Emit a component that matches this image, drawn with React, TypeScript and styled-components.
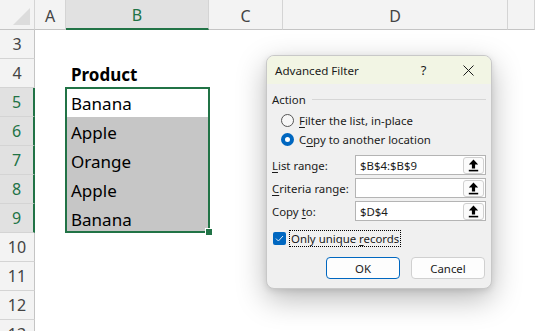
import React from 'react'
import styled, { createGlobalStyle } from 'styled-components'

const GREEN = '#217346'
const UI_FONT = '"Noto Sans", "Open Sans", Arial, sans-serif'

const GlobalStyle = createGlobalStyle`
  html, body {
    margin: 0;
    padding: 0;
    background: #ffffff;
    overflow: hidden;
  }
  #root {
    position: relative;
    width: 535px;
    height: 331px;
    overflow: hidden;
  }
`

const Sheet = styled.div`
  display: grid;
  grid-template-columns: 35px 31px 143px 74px 225px 1fr;
  grid-template-rows: 30px repeat(11, 29px);
  font-family: ${UI_FONT};
  background: #ffffff;
`

const Placed = styled.div<{ $col: number; $row: number | string }>`
  grid-column: ${({ $col }) => $col};
  grid-row: ${({ $row }) => $row};
  box-sizing: border-box;
  min-width: 0;
`

const Corner = styled(Placed)`
  position: relative;
  background: #f3f3f3;
  border-right: 1px solid #d4d4d4;
  border-bottom: 1px solid #c4c4c4;

  &::after {
    content: '';
    position: absolute;
    right: 4px;
    bottom: 4px;
    width: 0;
    height: 0;
    border-left: 17px solid transparent;
    border-bottom: 17px solid #dcdcdc;
  }
`

const ColHeader = styled(Placed)<{ $selected?: boolean }>`
  display: flex;
  align-items: center;
  justify-content: center;
  padding-top: 2px;
  font-size: 16px;
  color: ${({ $selected }) => ($selected ? GREEN : '#444444')};
  background: ${({ $selected }) => ($selected ? '#e1e1e1' : '#f3f3f3')};
  border-right: 1px solid #d4d4d4;
  border-bottom: ${({ $selected }) => ($selected ? `2px solid ${GREEN}` : '1px solid #c4c4c4')};
`

const RowHeader = styled(Placed)<{ $selected?: boolean }>`
  display: flex;
  align-items: center;
  justify-content: center;
  font-size: 16px;
  color: ${({ $selected }) => ($selected ? GREEN : '#444444')};
  background: ${({ $selected }) => ($selected ? '#e1e1e1' : '#f3f3f3')};
  border-bottom: 1px solid #d4d4d4;
  border-right: ${({ $selected }) => ($selected ? `2px solid ${GREEN}` : '1px solid #c4c4c4')};
`

const Cell = styled(Placed)<{ $bold?: boolean; $shaded?: boolean }>`
  display: flex;
  align-items: flex-end;
  padding: 0 0 2px 5px;
  font-size: 17px;
  font-weight: ${({ $bold }) => ($bold ? 700 : 400)};
  color: #000000;
  background: ${({ $shaded }) => ($shaded ? '#c6c6c6' : 'transparent')};
`

const Selection = styled(Placed)`
  position: relative;
  margin: -1px -1px 0 -1px;
  border: 2px solid ${GREEN};
  pointer-events: none;
`

const FillHandle = styled.div`
  position: absolute;
  right: -5px;
  bottom: -5px;
  width: 6px;
  height: 6px;
  background: ${GREEN};
  border: 1px solid #ffffff;
`

/* dialog */

const Dialog = styled.div`
  position: absolute;
  left: 266px;
  top: 55px;
  width: 226px;
  height: 234px;
  box-sizing: border-box;
  display: flex;
  flex-direction: column;
  border: 1px solid #c8c8c8;
  border-radius: 8px;
  background: #f0f0f0;
  box-shadow: 0 10px 30px rgba(0, 0, 0, 0.28), 0 2px 6px rgba(0, 0, 0, 0.1);
  overflow: hidden;
  font-family: ${UI_FONT};
  font-size: 11.4px;
  color: #1b1b1b;
`

const TitleBar = styled.div`
  display: flex;
  align-items: center;
  height: 28px;
  background: #f2f5e4;
`

const Title = styled.div`
  flex: 1;
  padding-left: 8px;
  font-size: 11.6px;
`

const TitleButton = styled.div`
  width: 45px;
  height: 100%;
  display: flex;
  align-items: center;
  justify-content: center;
  font-size: 13px;
`

const Body = styled.div`
  display: flex;
  flex-direction: column;
  padding: 7px 5px 0 5px;
`

const GroupTitle = styled.div`
  display: flex;
  align-items: center;
  gap: 6px;
  height: 16px;

  &::after {
    content: '';
    flex: 1;
    height: 1px;
    background: #d6d6d6;
  }
`

const RadioRow = styled.label<{ $first?: boolean }>`
  display: flex;
  align-items: center;
  gap: 5px;
  height: 19px;
  margin-top: ${({ $first }) => ($first ? '4px' : '0')};
  padding-left: 9px;
`

const Radio = styled.span<{ $checked?: boolean }>`
  box-sizing: border-box;
  width: 13px;
  height: 13px;
  border-radius: 50%;
  background: ${({ $checked }) => ($checked ? '#ffffff' : '#f7f7f7')};
  border: ${({ $checked }) => ($checked ? '4px solid #0067c0' : '1px solid #555555')};
`

const Fields = styled.div`
  display: flex;
  flex-direction: column;
  gap: 3px;
  margin-top: 6px;
`

const FieldRow = styled.div`
  display: flex;
  align-items: center;
  height: 20px;
`

const FieldLabel = styled.div`
  width: 83px;
`

const RefBox = styled.div`
  flex: 1;
  height: 20px;
  box-sizing: border-box;
  display: flex;
  align-items: center;
  padding: 0 1px 0 4px;
  background: #ffffff;
  border: 1px solid #b4b4b4;
`

const RefValue = styled.div`
  flex: 1;
`

const RefButton = styled.div`
  width: 21px;
  height: 17px;
  box-sizing: border-box;
  display: flex;
  align-items: center;
  justify-content: center;
  background: #fbfbfb;
  border: 1px solid #d0d0d0;
  border-radius: 3px;
`

const CheckRow = styled.div`
  display: flex;
  align-items: center;
  gap: 3px;
  margin-top: 9px;
  padding-left: 1px;
`

const CheckBox = styled.span`
  width: 13px;
  height: 13px;
  display: flex;
  align-items: center;
  justify-content: center;
  border-radius: 2px;
  background: #0067c0;
`

const FocusLabel = styled.span`
  padding: 0 1px;
  border: 1px dotted #000000;
  line-height: 15px;
`

const Buttons = styled.div`
  display: flex;
  justify-content: flex-end;
  gap: 11px;
  margin-top: 10px;
  padding-right: 1px;
`

const Button = styled.div<{ $primary?: boolean }>`
  width: 74px;
  height: 22px;
  box-sizing: border-box;
  display: flex;
  align-items: center;
  justify-content: center;
  background: #fdfdfd;
  border: 1px solid ${({ $primary }) => ($primary ? '#0067c0' : '#d0d0d0')};
  border-radius: 4px;
`

const U = styled.span`
  text-decoration: underline;
  text-underline-offset: 2px;
`

const UploadIcon = () => (
  <svg width="11" height="13" viewBox="0 0 11 13">
    <path d="M5.5 0.5 L0.8 5.6 H3.9 V9.4 H7.1 V5.6 H10.2 Z" fill="#000" />
    <rect x="0.8" y="10.8" width="9.4" height="1.6" fill="#000" />
  </svg>
)

const CloseIcon = () => (
  <svg width="11" height="11" viewBox="0 0 11 11">
    <path d="M0.5 0.5 L10.5 10.5 M10.5 0.5 L0.5 10.5" stroke="#1b1b1b" strokeWidth="1" />
  </svg>
)

const CheckIcon = () => (
  <svg width="9" height="7" viewBox="0 0 9 7">
    <path d="M1 3.6 L3.4 6 L8 1" stroke="#dbe9f7" strokeWidth="1" fill="none" />
  </svg>
)

const columns = ['A', 'B', 'C', 'D', '']
const rows = [3, 4, 5, 6, 7, 8, 9, 10, 11, 12, 13]
const values: { row: number; text: string; bold?: boolean }[] = [
  { row: 4, text: 'Product', bold: true },
  { row: 5, text: 'Banana' },
  { row: 6, text: 'Apple' },
  { row: 7, text: 'Orange' },
  { row: 8, text: 'Apple' },
  { row: 9, text: 'Banana' },
]

const isSelectedRow = (r: number) => r >= 5 && r <= 9

const App = () => {
  return (
    <>
      <GlobalStyle />
      <Sheet>
        <Corner $col={1} $row={1} />
        {columns.map((c, i) => (
          <ColHeader key={i} $col={i + 2} $row={1} $selected={c === 'B'}>
            {c}
          </ColHeader>
        ))}
        {rows.map((r) => (
          <RowHeader key={r} $col={1} $row={r - 1} $selected={isSelectedRow(r)}>
            {r}
          </RowHeader>
        ))}
        {values.map((v) => (
          <Cell key={v.row} $col={3} $row={v.row - 1} $bold={v.bold} $shaded={v.row > 5}>
            {v.text}
          </Cell>
        ))}
        <Selection $col={3} $row="4 / 9">
          <FillHandle />
        </Selection>
      </Sheet>

      <Dialog>
        <TitleBar>
          <Title>Advanced Filter</Title>
          <TitleButton>?</TitleButton>
          <TitleButton>
            <CloseIcon />
          </TitleButton>
        </TitleBar>
        <Body>
          <GroupTitle>Action</GroupTitle>
          <RadioRow $first>
            <Radio />
            <span>
              <U>F</U>ilter the list, in-place
            </span>
          </RadioRow>
          <RadioRow>
            <Radio $checked />
            <span>
              C<U>o</U>py to another location
            </span>
          </RadioRow>
          <Fields>
            <FieldRow>
              <FieldLabel>
                <U>L</U>ist range:
              </FieldLabel>
              <RefBox>
                <RefValue>$B$4:$B$9</RefValue>
                <RefButton>
                  <UploadIcon />
                </RefButton>
              </RefBox>
            </FieldRow>
            <FieldRow>
              <FieldLabel>
                <U>C</U>riteria range:
              </FieldLabel>
              <RefBox>
                <RefValue />
                <RefButton>
                  <UploadIcon />
                </RefButton>
              </RefBox>
            </FieldRow>
            <FieldRow>
              <FieldLabel>
                Copy <U>t</U>o:
              </FieldLabel>
              <RefBox>
                <RefValue>$D$4</RefValue>
                <RefButton>
                  <UploadIcon />
                </RefButton>
              </RefBox>
            </FieldRow>
          </Fields>
          <CheckRow>
            <CheckBox>
              <CheckIcon />
            </CheckBox>
            <FocusLabel>
              Only unique <U>r</U>ecords
            </FocusLabel>
          </CheckRow>
          <Buttons>
            <Button $primary>OK</Button>
            <Button>Cancel</Button>
          </Buttons>
        </Body>
      </Dialog>
    </>
  )
}

export default App
